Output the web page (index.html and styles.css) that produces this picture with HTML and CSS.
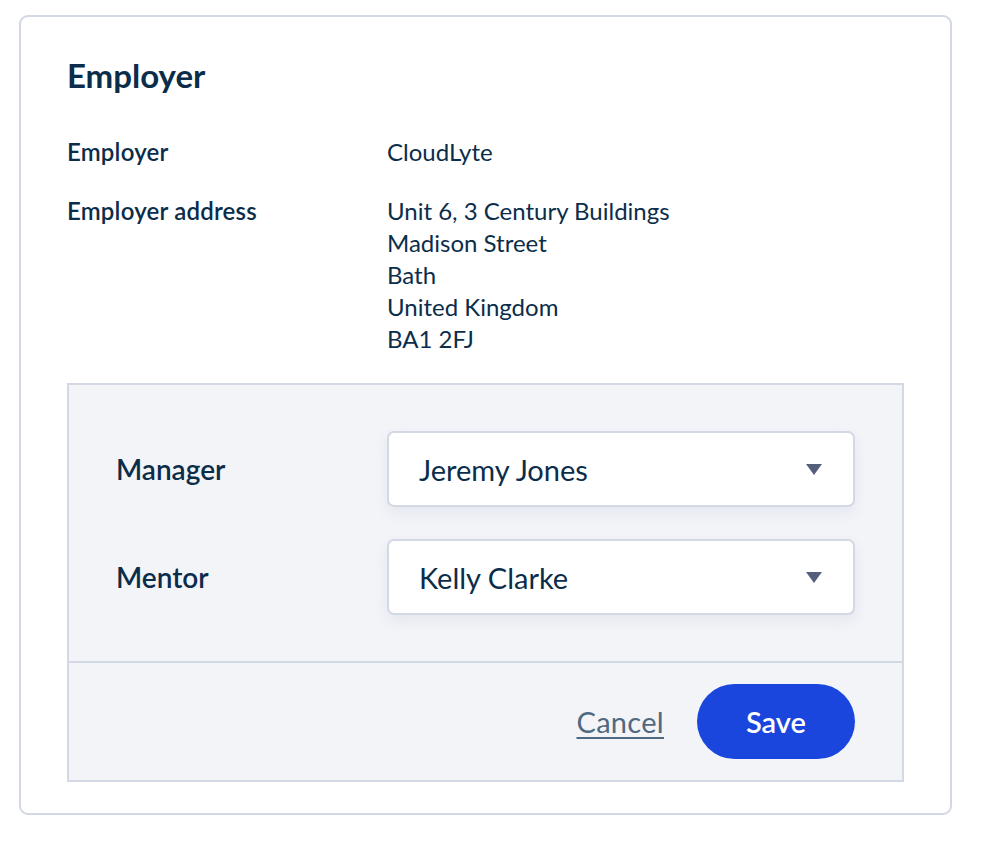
FILE: index.html
```html
<!DOCTYPE html>
<html lang="en">
<head>
<meta charset="utf-8">
<title>Employer</title>
<link rel="stylesheet" href="styles.css">
</head>
<body>
<section class="card">
  <h2 class="title">Employer</h2>
  <dl class="details">
    <div class="row">
      <dt>Employer</dt>
      <dd>CloudLyte</dd>
    </div>
    <div class="row">
      <dt>Employer address</dt>
      <dd>Unit 6, 3 Century Buildings<br>Madison Street<br>Bath<br>United Kingdom<br>BA1 2FJ</dd>
    </div>
  </dl>
  <form class="panel">
    <div class="fields">
      <div class="field">
        <label class="field-label">Manager</label>
        <div class="select"><span>Jeremy Jones</span><svg class="caret" width="16" height="11" viewBox="0 0 16 11"><path d="M0 0H16L8 11Z" fill="#555f7c"/></svg></div>
      </div>
      <div class="field">
        <label class="field-label">Mentor</label>
        <div class="select"><span>Kelly Clarke</span><svg class="caret" width="16" height="11" viewBox="0 0 16 11"><path d="M0 0H16L8 11Z" fill="#555f7c"/></svg></div>
      </div>
    </div>
    <div class="actions">
      <a class="cancel" href="#">Cancel</a>
      <button class="save" type="button">Save</button>
    </div>
  </form>
</section>
</body>
</html>
```
FILE: styles.css
```css
* { box-sizing: border-box; }
body {
  margin: 0;
  background: #ffffff;
  font-family: "Lato", "Noto Sans", sans-serif;
  color: #0b2d4a;
}
.card {
  margin: 15px 0 0 19px;
  width: 933px;
  height: 800px;
  border: 2px solid #d3d8e5;
  border-radius: 9px;
  padding: 38px 46px 31px 46px;
  display: flex;
  flex-direction: column;
}
.title {
  margin: 0;
  font-size: 33px;
  font-weight: 700;
  line-height: 40px;
}
.details {
  margin: 41px 0 0 0;
  display: flex;
  flex-direction: column;
  gap: 27px;
}
.row {
  display: flex;
}
.row dt {
  width: 320px;
  font-size: 24px;
  font-weight: 600;
  line-height: 32px;
  letter-spacing: 0.2px;
}
.row dd {
  margin: 0;
  font-size: 24px;
  line-height: 32px;
}
.panel {
  margin-top: 28px;
  flex: 1;
  background: #f3f4f8;
  border: 2px solid #d3d8e5;
  display: flex;
  flex-direction: column;
}
.fields {
  padding: 46px 47px 46px 47px;
  display: flex;
  flex-direction: column;
  gap: 32px;
  border-bottom: 2px solid #d3d8e5;
}
.field {
  display: flex;
  align-items: center;
}
.field-label {
  width: 271px;
  font-size: 28px;
  font-weight: 600;
}
.select {
  flex: 1;
  height: 76px;
  background: #ffffff;
  border: 2px solid #d3d8e5;
  border-radius: 7px;
  box-shadow: 0 6px 14px rgba(60, 80, 140, 0.08);
  display: flex;
  align-items: center;
  justify-content: space-between;
  padding: 0 31px 0 30px;
  font-size: 29px;
}
.caret { display: block; }
.actions {
  flex: 1;
  display: flex;
  align-items: center;
  justify-content: flex-end;
  gap: 33px;
  padding: 0 47px 0 0;
}
.cancel {
  color: #4f6a80;
  font-size: 29px;
  letter-spacing: 0.3px;
  text-decoration: underline;
  text-underline-offset: 4px;
  text-decoration-thickness: 2px;
}
.save {
  width: 158px;
  height: 75px;
  border: none;
  border-radius: 38px;
  background: #1a46de;
  color: #ffffff;
  font-family: inherit;
  font-size: 29px;
  font-weight: 600;
  cursor: pointer;
}
```
